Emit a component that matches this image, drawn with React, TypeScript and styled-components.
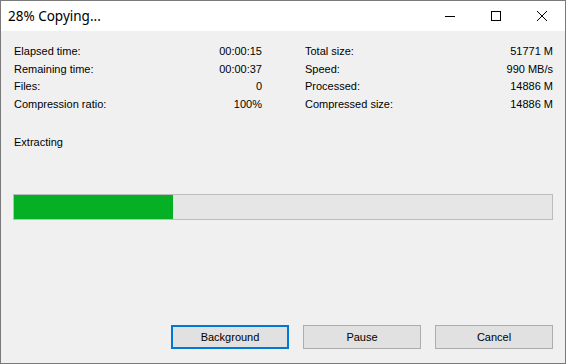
import React from 'react';
import styled, { createGlobalStyle } from 'styled-components';

const GlobalStyle = createGlobalStyle`
  * { box-sizing: border-box; }
  body {
    margin: 0;
    background: #f0f0f0;
  }
`;

const Window = styled.div`
  width: 566px;
  height: 364px;
  border: 1px solid #7a7a7a;
  background: #f0f0f0;
  display: flex;
  flex-direction: column;
  font-family: 'Liberation Sans', Arial, sans-serif;
  font-size: 11px;
  color: #000;
`;

const TitleBar = styled.div`
  height: 30px;
  background: #fff;
  display: flex;
  align-items: center;
  flex-shrink: 0;
`;

const Title = styled.div`
  flex: 1;
  padding-left: 7px;
  font-family: 'Noto Sans', 'Open Sans', sans-serif;
  font-size: 13.5px;
  color: #000;
`;

const CaptionButton = styled.div`
  width: 46px;
  height: 30px;
  display: flex;
  align-items: center;
  justify-content: center;
`;

const Content = styled.div`
  flex: 1;
  display: flex;
  flex-direction: column;
  padding: 12px 12px 14px 12px;
`;

const StatsGrid = styled.div`
  display: grid;
  grid-template-columns: 249px 249px;
  column-gap: 42px;
`;

const Column = styled.div`
  display: flex;
  flex-direction: column;
`;

const StatRow = styled.div`
  display: flex;
  justify-content: space-between;
  height: 17.67px;
  line-height: 17.67px;
  padding-left: 1px;
`;

const Status = styled.div`
  margin-top: 20px;
  line-height: 17.67px;
  padding-left: 1px;
`;

const ProgressTrack = styled.div`
  margin-top: 43px;
  height: 26px;
  border: 1px solid #bcbcbc;
  background: #e6e6e6;
  display: flex;
`;

const ProgressFill = styled.div`
  height: 100%;
  background: #06b025;
`;

const ButtonRow = styled.div`
  margin-top: auto;
  display: flex;
  justify-content: flex-end;
  gap: 14px;
`;

const Button = styled.button<{ $primary?: boolean }>`
  width: 118px;
  height: 24px;
  padding: 0;
  font-family: 'Liberation Sans', Arial, sans-serif;
  font-size: 11px;
  color: #000;
  background: #e1e1e1;
  border: ${p => (p.$primary ? '2px solid #0078d7' : '1px solid #adadad')};
  border-radius: 0;
`;

const leftStats = [
  ['Elapsed time:', '00:00:15'],
  ['Remaining time:', '00:00:37'],
  ['Files:', '0'],
  ['Compression ratio:', '100%'],
];

const rightStats = [
  ['Total size:', '51771 M'],
  ['Speed:', '990 MB/s'],
  ['Processed:', '14886 M'],
  ['Compressed size:', '14886 M'],
];

const App = () => {
  const progress = 29.5;

  return (
    <>
      <GlobalStyle />
      <Window>
        <TitleBar>
          <Title>28% Copying...</Title>
          <CaptionButton>
            <svg width="10" height="10" viewBox="0 0 10 10">
              <line x1="0" y1="5.5" x2="10" y2="5.5" stroke="#000" strokeWidth="1" />
            </svg>
          </CaptionButton>
          <CaptionButton>
            <svg width="10" height="10" viewBox="0 0 10 10">
              <rect x="0.5" y="0.5" width="9" height="9" fill="none" stroke="#000" strokeWidth="1" />
            </svg>
          </CaptionButton>
          <CaptionButton>
            <svg width="10" height="10" viewBox="0 0 10 10">
              <path d="M0 0 L10 10 M10 0 L0 10" stroke="#000" strokeWidth="1" />
            </svg>
          </CaptionButton>
        </TitleBar>
        <Content>
          <StatsGrid>
            <Column>
              {leftStats.map(([label, value]) => (
                <StatRow key={label}>
                  <span>{label}</span>
                  <span>{value}</span>
                </StatRow>
              ))}
            </Column>
            <Column>
              {rightStats.map(([label, value]) => (
                <StatRow key={label}>
                  <span>{label}</span>
                  <span>{value}</span>
                </StatRow>
              ))}
            </Column>
          </StatsGrid>
          <Status>Extracting</Status>
          <ProgressTrack>
            <ProgressFill style={{ width: `${progress}%` }} />
          </ProgressTrack>
          <ButtonRow>
            <Button $primary>Background</Button>
            <Button>Pause</Button>
            <Button>Cancel</Button>
          </ButtonRow>
        </Content>
      </Window>
    </>
  );
};

export default App;
